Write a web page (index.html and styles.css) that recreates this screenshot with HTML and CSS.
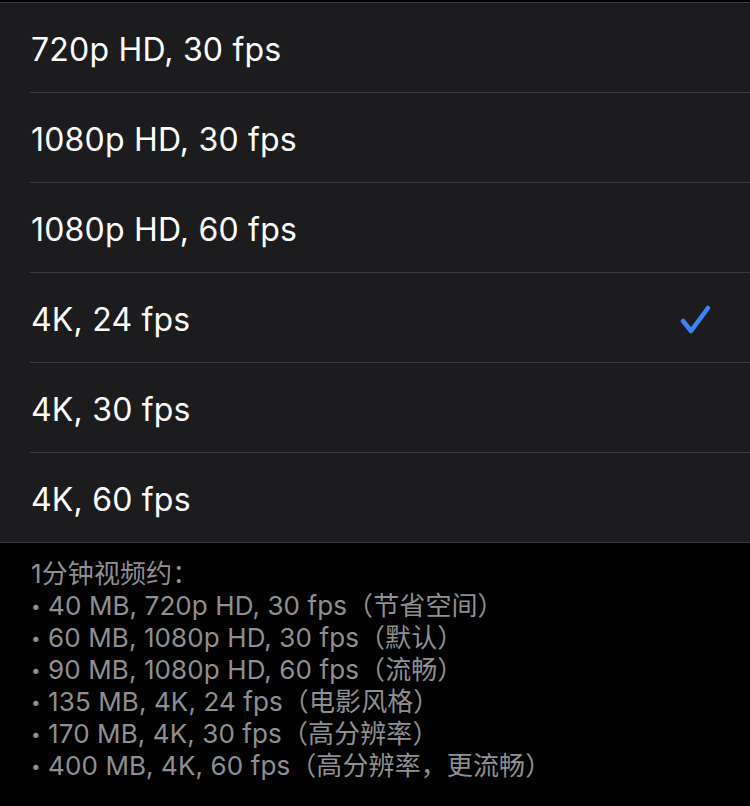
FILE: index.html
```html
<!DOCTYPE html>
<html lang="zh-CN">
<head>
    <meta charset="UTF-8">
    <meta name="viewport" content="width=device-width, initial-scale=1.0">
    <title>录制视频</title>
    <link rel="stylesheet" href="styles.css">
</head>
<body>
    <ul class="options">
        <li class="option"><div class="option-body"><span>720p HD, 30 fps</span></div></li>
        <li class="option"><div class="option-body"><span>1080p HD, 30 fps</span></div></li>
        <li class="option"><div class="option-body"><span>1080p HD, 60 fps</span></div></li>
        <li class="option selected">
            <div class="option-body">
                <span>4K, 24 fps</span>
                <svg class="check" width="34" height="34" viewBox="0 0 34 34">
                    <path d="M5 18 L13 28 L30 5" fill="none" stroke="#3a84f7" stroke-width="4.6" stroke-linecap="round" stroke-linejoin="round"/>
                </svg>
            </div>
        </li>
        <li class="option"><div class="option-body"><span>4K, 30 fps</span></div></li>
        <li class="option"><div class="option-body"><span>4K, 60 fps</span></div></li>
    </ul>

    <div class="footer">
        <p>1分钟视频约：</p>
        <p><span class="dot">•</span> 40 MB, 720p HD, 30 fps（节省空间）</p>
        <p><span class="dot">•</span> 60 MB, 1080p HD, 30 fps（默认）</p>
        <p><span class="dot">•</span> 90 MB, 1080p HD, 60 fps（流畅）</p>
        <p><span class="dot">•</span> 135 MB, 4K, 24 fps（电影风格）</p>
        <p><span class="dot">•</span> 170 MB, 4K, 30 fps（高分辨率）</p>
        <p><span class="dot">•</span> 400 MB, 4K, 60 fps（高分辨率，更流畅）</p>
    </div>
</body>
</html>
```

FILE: styles.css
```css
body {
    margin: 0;
    padding-top: 2px;
    background-color: #000;
    font-family: Inter, "Noto Sans CJK SC", sans-serif;
}

.options {
    list-style: none;
    margin: 0;
    padding: 0;
    background-color: #1c1c1e;
    border-top: 1px solid #3a3a3c;
    border-bottom: 1px solid #3a3a3c;
}

.option {
    padding-left: 30px;
}

.option-body {
    height: 85px;
    padding-top: 4px;
    display: flex;
    align-items: center;
    justify-content: space-between;
    padding-left: 1px;
    padding-right: 38px;
    border-bottom: 1px solid #3a3a3c;
    color: #fff;
    font-size: 32px;
    letter-spacing: 0.2px;
}

.option:last-child .option-body {
    border-bottom: none;
}

.check {
    display: block;
}

.footer {
    padding: 15px 31px 0;
    color: #8e8e93;
    font-size: 26px;
    line-height: 32px;
    letter-spacing: 0.1px;
    text-spacing-trim: space-all;
}

.footer p {
    margin: 0;
}

.dot {
    font-size: 17px;
    vertical-align: 3px;
}
```
